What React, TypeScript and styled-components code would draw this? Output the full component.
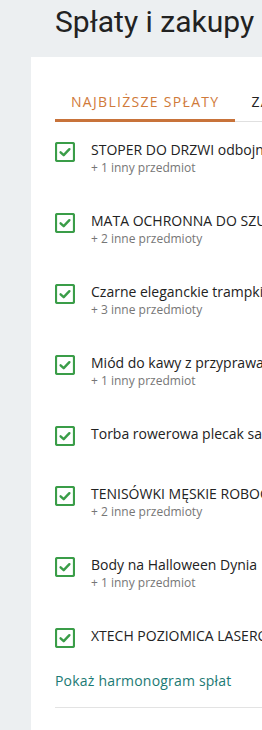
import React from "react";
import styled, { createGlobalStyle } from "styled-components";

const GlobalStyle = createGlobalStyle`
  html, body {
    margin: 0;
    padding: 0;
    background: #eceff1;
    overflow: hidden;
  }
  body {
    font-family: "Open Sans", "Liberation Sans", sans-serif;
  }
`;

type Payment = {
  title: string;
  more?: string;
};

const PAYMENTS: Payment[] = [
  { title: "STOPER DO DRZWI odbojnik magnetyczny", more: "+ 1 inny przedmiot" },
  { title: "MATA OCHRONNA DO SZUFLAD", more: "+ 2 inne przedmioty" },
  { title: "Czarne eleganckie trampki", more: "+ 3 inne przedmioty" },
  { title: "Miód do kawy z przyprawami", more: "+ 1 inny przedmiot" },
  { title: "Torba rowerowa plecak sakwa" },
  { title: "TENISÓWKI MĘSKIE ROBOCZE", more: "+ 2 inne przedmioty" },
  { title: "Body na Halloween Dynia", more: "+ 1 inny przedmiot" },
  { title: "XTECH POZIOMICA LASEROWA" },
];

const CheckIcon: React.FC = () => (
  <svg width="20" height="20" viewBox="0 0 20 20">
    <rect x="1" y="1" width="18" height="18" rx="1.5" fill="none" stroke="#3a9d48" strokeWidth="2.2" />
    <path d="M5.6 10.3 L8.7 13.2 L14.4 7.2" fill="none" stroke="#3a9d48" strokeWidth="2.4" strokeLinecap="round" strokeLinejoin="round" />
  </svg>
);

const App: React.FC = () => {
  return (
    <Page>
      <GlobalStyle />
      <Title>Spłaty i zakupy</Title>
      <Card>
        <Tabs>
          <Tab $active>NAJBLIŻSZE SPŁATY</Tab>
          <Tab>ZAKUPY</Tab>
        </Tabs>
        <List>
          {PAYMENTS.map((p) => (
            <Row key={p.title} $double={!!p.more}>
              <CheckIcon />
              <RowText>
                <ItemTitle>{p.title}</ItemTitle>
                {p.more && <ItemMore>{p.more}</ItemMore>}
              </RowText>
            </Row>
          ))}
        </List>
        <ScheduleLink href="#">Pokaż harmonogram spłat</ScheduleLink>
        <Divider />
      </Card>
    </Page>
  );
};

export default App;

const Page = styled.div`
  width: 262px;
  height: 730px;
  overflow: hidden;
  background: #eceff1;
`;

const Title = styled.h1`
  margin: 0;
  padding: 3px 0 0 55px;
  height: 53px;
  box-sizing: border-box;
  font-family: Roboto, "Liberation Sans", sans-serif;
  font-weight: 400;
  font-size: 30px;
  line-height: 38px;
  color: #222;
  white-space: nowrap;
`;

const Card = styled.section`
  margin-left: 31px;
  margin-top: 4px;
  width: 400px;
  height: 700px;
  background: #fff;
  padding: 26px 0 0 24px;
  box-sizing: border-box;
`;

const Tabs = styled.div`
  display: flex;
  border-bottom: 1px solid #e0e0e0;
`;

const Tab = styled.div<{ $active?: boolean }>`
  padding: 9px 16px 8px 16px;
  font-size: 14px;
  letter-spacing: 1.3px;
  line-height: 19px;
  white-space: nowrap;
  color: ${(p) => (p.$active ? "#d07a3a" : "#222")};
  border-bottom: 3px solid ${(p) => (p.$active ? "#c8733a" : "transparent")};
  margin-bottom: -1px;
`;

const List = styled.div`
  display: flex;
  flex-direction: column;
  padding-top: 8px;
`;

const Row = styled.div<{ $double?: boolean }>`
  display: flex;
  align-items: flex-start;
  gap: 16px;
  height: ${(p) => (p.$double ? "71px" : "60px")};
  padding-top: 10px;
  box-sizing: border-box;
  svg {
    flex: none;
    margin-top: 2px;
  }
  &:last-child {
    height: 55px;
  }
`;

const RowText = styled.div`
  display: flex;
  flex-direction: column;
  white-space: nowrap;
`;

const ItemTitle = styled.span`
  font-size: 14px;
  line-height: 19px;
  color: #222;
`;

const ItemMore = styled.span`
  font-size: 12px;
  line-height: 17px;
  color: #767676;
`;

const ScheduleLink = styled.a`
  display: block;
  font-size: 14px;
  letter-spacing: 0.2px;
  line-height: 19px;
  color: #1b7a74;
  text-decoration: none;
`;

const Divider = styled.hr`
  margin: 17px 0 0 0;
  border: 0;
  border-top: 1px solid #e3e3e3;
`;
